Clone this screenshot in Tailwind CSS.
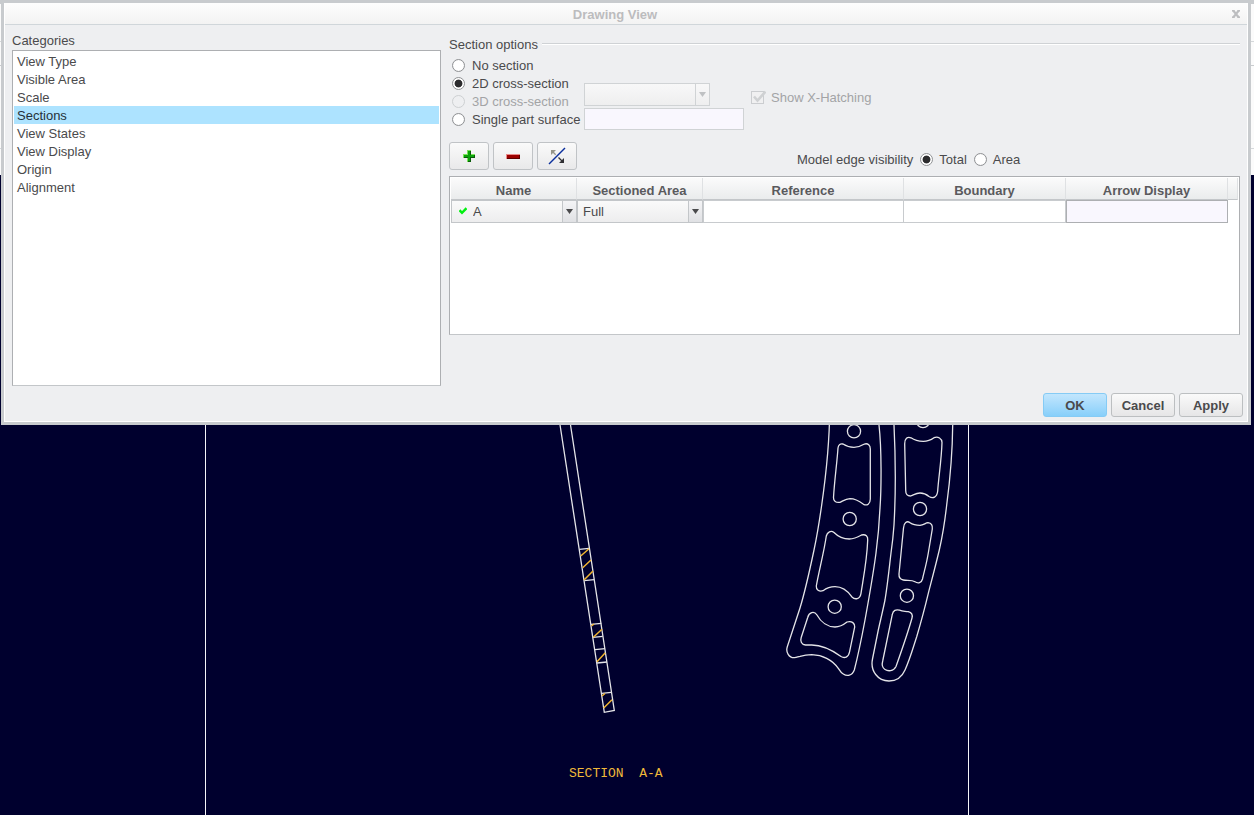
<!DOCTYPE html>
<html lang="en">
<head>
<meta charset="utf-8">
<meta name="viewport" content="width=device-width, initial-scale=1">
<title>Drawing View</title>
<script src="https://cdn.jsdelivr.net/npm/@tailwindcss/browser@4"></script>
</head>
<body class="relative min-h-screen overflow-hidden bg-[#00002e] font-['Liberation_Sans',Arial,sans-serif] text-[13px] leading-[18px] text-[#4a4a4c]">

<!-- Application toolbar area behind the dialog -->
<div class="absolute inset-x-0 top-0 h-[175px] border-t-4 border-[#c8cbce] bg-[#fbfbfb]" aria-hidden="true">
  <div class="h-[38px] border-b border-[#d5d8da]"></div>
  <div class="h-6 border-b border-[#c8cbce]"></div>
  <div class="h-[83px] border-b border-[#d5d8da]"></div>
</div>

<!-- Model canvas -->
<svg class="absolute inset-0 h-full w-full" viewBox="0 0 1254 815" preserveAspectRatio="xMidYMin slice" fill="none" stroke="#e4e4e8" stroke-width="1.3" aria-label="Section drawing">
  <g stroke="#f4f4f8" stroke-width="1" shape-rendering="crispEdges">
    <path d="M205.5 400V815M968.5 400V815"/>
  </g>
  <path d="M556.5 402L604.3 712.3L614.3 710.5L567 402"/>
  <path d="M579.3 549.3L589 548.3M584.3 580.7L594 579.7M591 624.3L601.3 623.3M593 637.3L602.7 636.3M595 649.7L605 648.7M597 663L607 662M601.7 693.3L611.3 692.3"/>
  <path stroke="#f0b430" stroke-width="1.5" d="M580.7 556L589 548.7M582.7 567.7L591 560M584 580L593 571M593.3 637.3L602 629.3M597 661.7L605.3 652.7M603.7 708L612 699.7M591.5 626L594 624M602 696L605 693.5"/>
  <path d="M829.7 410C829.5 445 826 475 821.7 505C819.5 520.5 817 536 814 550C810 569 805.5 590 800 608L787.3 646.7C785.5 652 789 658 794.5 657.7C797 657.5 798 656.6 800 656.3C804 655.2 808 654.7 811.7 654.7C818 655 822 656 826.7 658.3C832 661 836 665 838.3 668.3C840 671 841.5 673 843.3 674C847 676.5 852 676 854.3 670C859 652 862 636 865 620C869 598 873 576 876 553C878 538 879.3 523 880 508C881.3 490 881.8 450 879 425L878 410"/>
  <path d="M893.3 410L894 425C895.7 460 895.7 495 894 525C893.3 535 892.3 544 891 553C889 570 887.5 585 885 600C883 610 880.5 620 878.3 630L872.5 659C870 671 878 681 889 681C896 681 902 677 905 670C910 659 913 648 916.7 636.7C921 622 924.8 608 928.3 593.3C932 579 936 564 939.3 550C943 534 945 520 946.7 505C950 480 952.5 450 952.7 425V410"/>
  <g>
    <circle cx="854" cy="431.3" r="6.6"/><circle cx="849.7" cy="519" r="6.6"/><circle cx="834.7" cy="606.7" r="6.6"/>
    <circle cx="923" cy="421" r="6.6"/><circle cx="920" cy="509" r="6.6"/><circle cx="906.9" cy="595.7" r="6.6"/>
  </g>
  <path d="M838 448C838.3 444.5 840.5 443.3 843 444C846 446 849 447.3 854 447.3C859 447.3 862 445.5 864.5 444C868 443 870.3 445.5 870.3 449V499C870.3 504 867 506 863.5 504.3C859 501 855 498.7 850 498.7C845.5 499 843 501 840 502.3C836 503 833.3 501 833.5 497.5C834.5 480 837 463 838 448Z"/>
  <path d="M826.3 536C827.3 532 831 530 834 532.5C838 536.5 843 539 849.3 539C854.5 539 858 537 861.5 535C866 534 868 536.5 867.7 540C867 560 863.5 577 861 593.3C860 599.5 855 600 851.7 596.7C847 590 841.5 586.7 835 586.7C829 586.7 826 588.5 823 590.7C819 592 816 589.5 816.3 586C819 571 824 552 826.3 536Z"/>
  <path d="M807.7 617.5C809 612.5 814 610.5 817 615C821 622.5 828 627 835 627C840.5 627 844.5 624 847 622C852 620.5 855 623.5 854.7 627L849.5 652C848.5 657.5 844.5 658.5 841 656.5C832 650 822 645 811.7 645H805.5C801.5 644.7 800 641 801.2 637.5Z"/>
  <path d="M904.7 444C904.5 438.5 907.5 436.3 911 437.8C914.5 440.3 918.5 441.3 923.3 441.3C928.5 441.3 931.5 439.5 934 437.7C938 436 942 438.5 942 442.5C941.5 460 938.5 478 937.7 491C937 497.5 933 499 929 496.5C926 494 923 493 920 493C916 493 913.5 495 910.5 496C907.5 496 905.7 494 905.7 490.5Z"/>
  <path d="M903.5 528C903.7 522.5 907 520.5 910 522.7C913 524.8 916.5 525.3 920 525.3C923.5 525 925.5 523 928 522.7C931.5 523 932.7 525.5 932.3 529L928.3 553C926.5 564 924 572 922.5 579C921.5 583 918 583.7 915 581.8C911.5 579.5 907 581 903.3 580C900 579.3 898.8 577 899 574Z"/>
  <path d="M892.3 614.5C893 610.5 896 609 899.5 610.2C903 611.8 905 611 908.3 611.7C911.3 612.5 912.8 615 912 618C907.5 634 901.5 651 896 666.5C893.5 671.5 888 671.5 885 669.5C882 667.5 881.7 664.5 882.7 661Z"/>
  <text x="569" y="777" xml:space="preserve" fill="#f0b93a" stroke="none" class="font-['Liberation_Mono',monospace] text-[13px]">SECTION  A-A</text>
</svg>

<!-- Dialog -->
<main class="relative ml-px mr-[3px] border-[3px] border-[#c8cbce] bg-[#eeeff1]" role="dialog" aria-labelledby="dialog-title">
<div class="border-x border-b border-white">
  <header class="flex h-[22px] items-center border-b border-[#d0d6da] bg-linear-to-b from-[#fdfdfd] to-[#f3f3f3]">
    <h1 id="dialog-title" class="flex-1 pt-[2px] text-center leading-4 font-bold text-[#bcbcbe]">Drawing View</h1>
    <button type="button" aria-label="Close" class="flex h-5 w-[22px] items-center justify-center">
      <svg class="h-2 w-2" viewBox="0 0 8 8" stroke="#bdbec0" stroke-width="2.2"><path d="M1.2 .5L6.8 7.5M6.8 .5L1.2 7.5"/><path stroke-width="1.4" d="M0 .7H2.5M5.5 .7H8M0 7.3H2.5M5.5 7.3H8"/></svg>
    </button>
  </header>

  <div class="flex gap-2 px-[7px] pt-[7px]">
    <section class="w-[429px] shrink-0">
      <h2 id="cat">Categories</h2>
      <div role="listbox" aria-labelledby="cat" class="flex h-[336px] flex-col border border-[#adafb2] border-b-[#c3c6c9] bg-white p-px">
        <button type="button" role="option" class="px-[3px] pt-[2px] text-left leading-4">View Type</button>
        <button type="button" role="option" class="px-[3px] pt-[2px] text-left leading-4">Visible Area</button>
        <button type="button" role="option" class="px-[3px] pt-[2px] text-left leading-4">Scale</button>
        <button type="button" role="option" aria-selected="true" class="bg-[#ade3ff] px-[3px] pt-[2px] text-left leading-4 text-[#26323a]">Sections</button>
        <button type="button" role="option" class="px-[3px] pt-[2px] text-left leading-4">View States</button>
        <button type="button" role="option" class="px-[3px] pt-[2px] text-left leading-4">View Display</button>
        <button type="button" role="option" class="px-[3px] pt-[2px] text-left leading-4">Origin</button>
        <button type="button" role="option" class="px-[3px] pt-[2px] text-left leading-4">Alignment</button>
      </div>
    </section>

    <section class="min-w-0 flex-1 pt-[3px]">
      <div class="flex items-center gap-1">
        <h2 class="pt-[2px] leading-4">Section options</h2>
        <div class="h-[2px] flex-1 border-t border-[#cfd2d5] bg-white"></div>
      </div>

      <div class="flex items-start pt-[3px]">
        <div class="flex w-[135px] flex-col whitespace-nowrap pl-[3px] leading-4">
          <label class="flex items-center gap-[7px]"><input type="radio" name="sec" class="h-[13px] w-[13px] appearance-none rounded-full border border-[#8f9194] bg-white bg-radial from-white from-60% to-[#d4d4d6] checked:from-[#2c2c2e] checked:from-45% checked:to-white checked:to-55%"><span class="pt-[2px]">No section</span></label>
          <label class="flex items-center gap-[7px]"><input type="radio" name="sec" checked class="h-[13px] w-[13px] appearance-none rounded-full border border-[#8f9194] bg-white bg-radial from-white from-60% to-[#d4d4d6] checked:from-[#2c2c2e] checked:from-45% checked:to-white checked:to-55%"><span class="pt-[2px]">2D cross-section</span></label>
          <label class="flex items-center gap-[7px] text-[#a3a4a6]"><input type="radio" name="sec" disabled class="h-[13px] w-[13px] appearance-none rounded-full border border-[#cdd0d2] bg-[#eeeff1]"><span class="pt-[2px]">3D cross-section</span></label>
          <label class="flex items-center gap-[7px]"><input type="radio" name="sec" class="h-[13px] w-[13px] appearance-none rounded-full border border-[#8f9194] bg-white bg-radial from-white from-60% to-[#d4d4d6] checked:from-[#2c2c2e] checked:from-45% checked:to-white checked:to-55%"><span class="pt-[2px]">Single part surface</span></label>
        </div>
        <div class="flex flex-col items-start gap-[2px] pt-[27px]">
          <div class="relative h-[23px] w-[126px]">
            <select disabled aria-label="3D cross-section" class="h-full w-full appearance-none border border-[#d0d3d5] bg-linear-to-b from-[#f8f8f8] to-[#eeeeef] opacity-100"><option></option></select>
            <span class="pointer-events-none absolute inset-y-px right-px flex w-[14px] items-center justify-center border-l border-[#d0d3d5]"><svg class="h-[5px] w-[7px]" viewBox="0 0 7 5" fill="#bfc1c3"><path d="M0 0H7L3.5 5Z"/></svg></span>
          </div>
          <input type="text" aria-label="Surface" class="h-[22px] w-[160px] border border-[#d0d3d5] bg-[#f9f7fe]">
        </div>
        <label class="ml-[7px] mt-8 flex items-center gap-[5px] leading-4 text-[#a3a4a6]">
          <span class="relative h-[15px] w-[15px]">
            <input type="checkbox" checked disabled class="absolute bottom-px left-0 h-[13px] w-[13px] appearance-none border border-[#cbcdd0] bg-[#f0f0f1]">
            <svg class="absolute inset-0 h-[15px] w-[15px]" viewBox="0 0 15 15" fill="none" stroke="#cfd1d3" stroke-width="2.6"><path d="M3 6.5L6.5 10.5L14.5 1.5"/></svg>
          </span><span class="pt-[2px]">Show X-Hatching</span></label>
      </div>

      <div class="mt-3 flex h-7 items-center gap-1">
        <button type="button" aria-label="Add" class="flex h-7 w-10 items-center justify-center rounded-[3px] border border-[#c0c3c6] bg-linear-to-b from-[#fafafa] to-[#e9e9ea]">
          <svg class="h-3 w-3" viewBox="0 0 12 12" shape-rendering="crispEdges"><path fill="#7ce45a" d="M4 0H8V4H12V5H4ZM0 4H5V8H0ZM4 0H5V12H4Z"/><path fill="#0a5a0a" d="M5 1H8V5H12V8H8V12H5V8H1V7H5Z"/><path fill="#0aa40a" d="M5 1H7V5H11V7H7V11H5V7H1V5H5Z"/></svg>
        </button>
        <button type="button" aria-label="Remove" class="flex h-7 w-10 items-center justify-center rounded-[3px] border border-[#c0c3c6] bg-linear-to-b from-[#fafafa] to-[#e9e9ea]">
          <svg class="h-[5px] w-[14px]" viewBox="0 0 14 5" shape-rendering="crispEdges"><path fill="#e98a8a" d="M0 0H14V5H0Z"/><path fill="#5c0000" d="M1 1H14V5H1Z"/><path fill="#9c0000" d="M1 1H13V4H1Z"/></svg>
        </button>
        <button type="button" aria-label="Flip direction" class="flex h-7 w-10 items-center justify-center rounded-[3px] border border-[#c0c3c6] bg-linear-to-b from-[#fafafa] to-[#e9e9ea]">
          <svg class="h-[18px] w-[18px]" viewBox="0 0 18 18" fill="none"><path stroke="#0a2f9c" stroke-width="1.4" d="M1 17L17 1"/><path fill="#96968a" d="M3 3H8L3 8Z"/><path stroke="#96968a" stroke-width="1.3" d="M4 4L7.7 7.7"/><path fill="#303034" d="M16 16H11L16 11Z"/><path stroke="#303034" stroke-width="1.3" d="M15 15L10.5 10.5"/></svg>
        </button>
        <div class="ml-[216px] flex items-center gap-[7px] pt-[7px]" role="radiogroup" aria-label="Model edge visibility">
          <span>Model edge visibility</span>
          <label class="flex items-center gap-[6px]"><input type="radio" name="edge" checked class="h-[13px] w-[13px] appearance-none rounded-full border border-[#8f9194] bg-white bg-radial from-white from-60% to-[#d4d4d6] checked:from-[#2c2c2e] checked:from-45% checked:to-white checked:to-55%">Total</label>
          <label class="flex items-center gap-[6px]"><input type="radio" name="edge" class="h-[13px] w-[13px] appearance-none rounded-full border border-[#8f9194] bg-white bg-radial from-white from-60% to-[#d4d4d6] checked:from-[#2c2c2e] checked:from-45% checked:to-white checked:to-55%">Area</label>
        </div>
      </div>

      <div class="mt-[6px] h-[159px] border border-[#adafb2] border-b-[#c3c6c9] bg-white p-px">
        <table class="w-full table-fixed border-separate border-spacing-0">
          <colgroup><col class="w-[126px]"><col class="w-[126px]"><col><col class="w-[162px]"><col class="w-[162px]"><col class="w-[10px]"></colgroup>
          <thead>
            <tr class="h-[22px] bg-linear-to-b from-[#fbfbfb] to-[#e9ebec] leading-4 text-[#5a5a5d]">
              <th class="border-r border-b border-r-[#dfe1e3] border-b-[#c3c6c9] p-0 pt-[5px]">Name</th>
              <th class="border-r border-b border-r-[#dfe1e3] border-b-[#c3c6c9] p-0 pt-[5px]">Sectioned Area</th>
              <th class="border-r border-b border-r-[#dfe1e3] border-b-[#c3c6c9] p-0 pt-[5px]">Reference</th>
              <th class="border-r border-b border-r-[#dfe1e3] border-b-[#c3c6c9] p-0 pt-[5px]">Boundary</th>
              <th class="border-r border-b border-r-[#dfe1e3] border-b-[#c3c6c9] p-0 pt-[5px]">Arrow Display</th>
              <td class="border-r border-b border-r-[#dfe1e3] border-b-[#c3c6c9] p-0"></td>
            </tr>
          </thead>
          <tbody>
            <tr class="h-[23px]">
              <td class="p-0"><div class="relative h-[23px]">
                <select aria-label="Name" class="h-full w-full appearance-none border border-[#c3c6c9] bg-linear-to-b from-[#fafafa] to-[#ededee] pl-[21px]"><option>A</option></select>
                <svg class="pointer-events-none absolute left-2 top-[7px] h-2 w-2" viewBox="0 0 8 8" fill="none" stroke="#00f010" stroke-width="2.4"><path d="M.5 3.2L3 5.8L7.5 1.2"/></svg>
                <span class="pointer-events-none absolute inset-y-px right-px flex w-[14px] items-center justify-center border-l border-[#c3c6c9] bg-linear-to-b from-[#f4f4f6] to-[#e0e1e4]"><svg class="h-[5px] w-[7px]" viewBox="0 0 7 5" fill="#4a4a4c"><path d="M0 0H7L3.5 5Z"/></svg></span>
              </div></td>
              <td class="p-0"><div class="relative h-[23px]">
                <select aria-label="Sectioned area" class="h-full w-full appearance-none border border-[#c3c6c9] bg-linear-to-b from-[#fafafa] to-[#ededee] pl-[5px]"><option>Full</option></select>
                <span class="pointer-events-none absolute inset-y-px right-px flex w-[14px] items-center justify-center border-l border-[#c3c6c9] bg-linear-to-b from-[#f4f4f6] to-[#e0e1e4]"><svg class="h-[5px] w-[7px]" viewBox="0 0 7 5" fill="#4a4a4c"><path d="M0 0H7L3.5 5Z"/></svg></span>
              </div></td>
              <td class="border border-[#c8cbce] p-0"></td>
              <td class="border border-l-0 border-[#c8cbce] p-0"></td>
              <td class="border border-[#adafb2] bg-[#f9f7fe] p-0"></td>
              <td class="p-0"></td>
            </tr>
          </tbody>
        </table>
      </div>
    </section>
  </div>

  <footer class="flex justify-end gap-1 px-1 pb-1 pt-[7px] font-bold">
    <button type="button" class="h-6 w-16 rounded-[3px] border border-[#85cbf5] bg-linear-to-b from-[#c2e6fd] to-[#87cffa] pt-[2px]">OK</button>
    <button type="button" class="h-6 w-16 rounded-[3px] border border-[#bcbfc1] bg-linear-to-b from-[#fafafa] to-[#e6e6e7] pt-[2px]">Cancel</button>
    <button type="button" class="h-6 w-16 rounded-[3px] border border-[#bcbfc1] bg-linear-to-b from-[#fafafa] to-[#e6e6e7] pt-[2px]">Apply</button>
  </footer>
</div>
</main>
</body>
</html>
